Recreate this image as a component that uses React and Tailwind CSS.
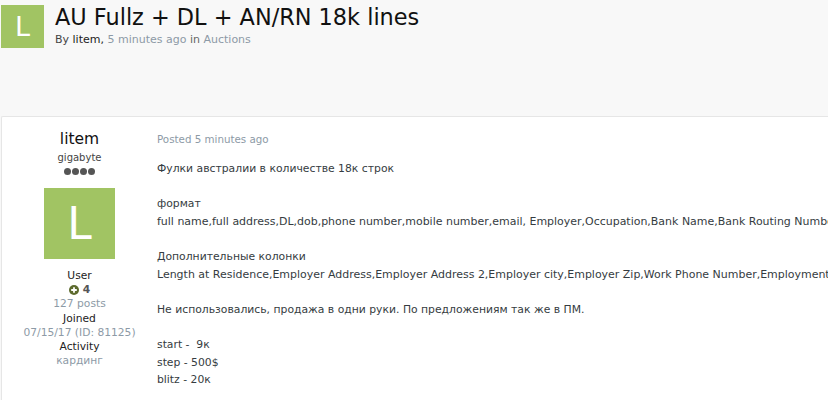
import React from "react";

const font = { fontFamily: '"DejaVu Sans", Verdana, sans-serif' };

function LetterAvatar({ className, letterClass }) {
  return (
    <div className={`flex items-center justify-center bg-[#a1c463] text-white ${className}`}>
      <span className={letterClass}>L</span>
    </div>
  );
}

function Author() {
  return (
    <div className="w-[155px] shrink-0 flex flex-col items-center pt-[10px] text-[10.7px] leading-[14.2px] text-[#8d9aa6]">
      <div className="text-[15.5px] leading-[24px] text-[#111]">litem</div>
      <div className="text-[10px] leading-[14px] text-[#444]">gigabyte</div>
      <div className="mt-[3px] flex gap-[1px]">
        {[0, 1, 2, 3].map((i) => (
          <span key={i} className="w-[7px] h-[7px] rounded-full bg-[#555]" />
        ))}
      </div>
      <LetterAvatar className="mt-[13px] w-[71px] h-[71px]" letterClass="text-[44px] leading-none" />
      <div className="mt-[10px] text-[#222]">User</div>
      <div className="flex items-center gap-[4px] text-[#555] font-bold">
        <svg width="10" height="10" viewBox="0 0 10 10">
          <circle cx="5" cy="5" r="5" fill="#5d6b2e" />
          <path d="M5 2.2v5.6M2.2 5h5.6" stroke="#fff" strokeWidth="1.8" />
        </svg>
        <span>4</span>
      </div>
      <div>127 posts</div>
      <div className="text-[#222]">Joined</div>
      <div>07/15/17 (ID: 81125)</div>
      <div className="text-[#222]">Activity</div>
      <div>кардинг</div>
    </div>
  );
}

function Post() {
  return (
    <div className="min-w-0 flex-1 pt-[15px] text-[10.8px] leading-[17.6px] text-[#353c41]">
      <div className="text-[10.3px] leading-[14px] text-[#8d9aa6]">Posted 5 minutes ago</div>
      <div className="mt-[14px] whitespace-nowrap">
        <p>Фулки австралии в количестве 18к строк</p>
        <p className="mt-[17.6px]">формат</p>
        <p className="text-[10.97px]">full name,full address,DL,dob,phone number,mobile number,email, Employer,Occupation,Bank Name,Bank Routing Number</p>
        <p className="mt-[17.6px]">Дополнительные колонки</p>
        <p className="text-[10.97px]">Length at Residence,Employer Address,Employer Address 2,Employer city,Employer Zip,Work Phone Number,Employment</p>
        <p className="mt-[17.6px]">Не использовались, продажа в одни руки. По предложениям так же в ПМ.</p>
        <p className="mt-[17.6px] whitespace-pre">start -  9к</p>
        <p>step - 500$</p>
        <p>blitz - 20к</p>
      </div>
    </div>
  );
}

export default function App() {
  return (
    <div className="h-[400px] overflow-hidden bg-[#f8f8f8]" style={font}>
      <div className="h-[116px] flex items-start gap-[11px] pl-[1px] pt-[5px]">
        <LetterAvatar className="w-[43px] h-[43px]" letterClass="text-[27px] leading-none" />
        <div>
          <h1 className="text-[22.4px] leading-[24px] text-[#111]">AU Fullz + DL + AN/RN 18k lines</h1>
          <div className="mt-[3px] text-[11px] leading-[16px] text-[#8d9aa6]">
            <span className="text-[#444]">By </span>
            <span className="text-[#222]">litem,</span> 5 minutes ago <span className="text-[#666]">in</span> Auctions
          </div>
        </div>
      </div>
      <div className="ml-[1px] h-[284px] flex bg-white border-t border-l border-[#e6e6e6] rounded-tl-[2px]">
        <Author />
        <Post />
      </div>
    </div>
  );
}
